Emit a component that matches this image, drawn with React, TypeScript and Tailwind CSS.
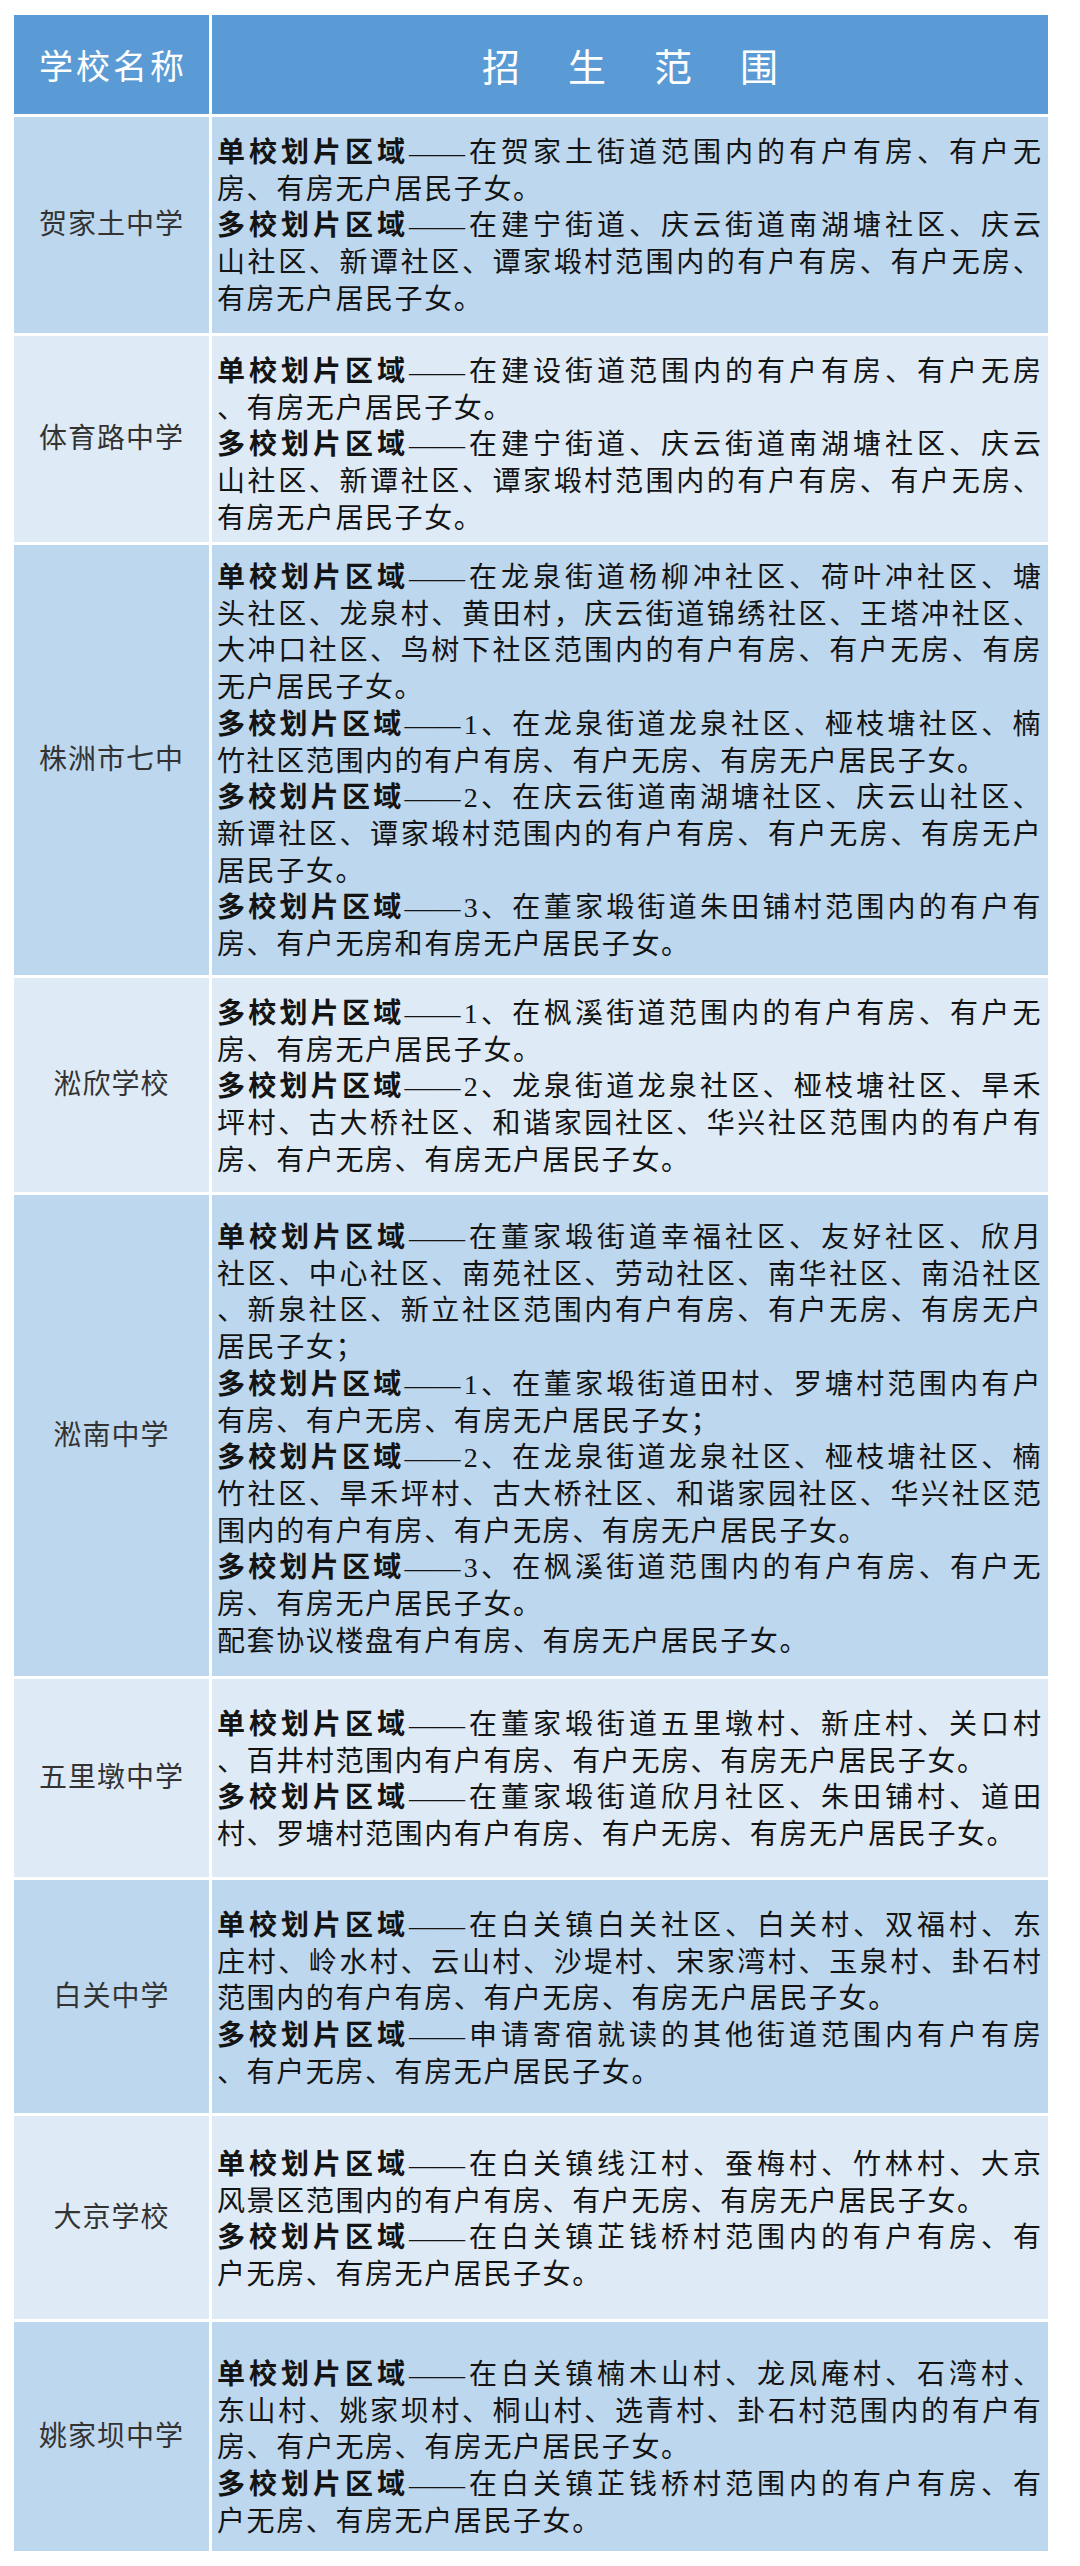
type Para = { b?: string; lines: string[] };
type Row = { name: string; h: string; pt: string; dark: boolean; paras: Para[] };

const S = "单校划片区域";
const M = "多校划片区域";

const rows: Row[] = [
  {
    name: "贺家土中学",
    h: "h-[216px]",
    pt: "pt-[18px]",
    dark: true,
    paras: [
      { b: S, lines: ["——在贺家土街道范围内的有户有房、有户无", "房、有房无户居民子女。"] },
      {
        b: M,
        lines: [
          "——在建宁街道、庆云街道南湖塘社区、庆云",
          "山社区、新谭社区、谭家塅村范围内的有户有房、有户无房、",
          "有房无户居民子女。",
        ],
      },
    ],
  },
  {
    name: "体育路中学",
    h: "h-[206px]",
    pt: "pt-[18px]",
    dark: false,
    paras: [
      { b: S, lines: ["——在建设街道范围内的有户有房、有户无房", "、有房无户居民子女。"] },
      {
        b: M,
        lines: [
          "——在建宁街道、庆云街道南湖塘社区、庆云",
          "山社区、新谭社区、谭家塅村范围内的有户有房、有户无房、",
          "有房无户居民子女。",
        ],
      },
    ],
  },
  {
    name: "株洲市七中",
    h: "h-[430px]",
    pt: "pt-[15px]",
    dark: true,
    paras: [
      {
        b: S,
        lines: [
          "——在龙泉街道杨柳冲社区、荷叶冲社区、塘",
          "头社区、龙泉村、黄田村，庆云街道锦绣社区、王塔冲社区、",
          "大冲口社区、鸟树下社区范围内的有户有房、有户无房、有房",
          "无户居民子女。",
        ],
      },
      { b: M, lines: ["——1、在龙泉街道龙泉社区、桠枝塘社区、楠", "竹社区范围内的有户有房、有户无房、有房无户居民子女。"] },
      {
        b: M,
        lines: [
          "——2、在庆云街道南湖塘社区、庆云山社区、",
          "新谭社区、谭家塅村范围内的有户有房、有户无房、有房无户",
          "居民子女。",
        ],
      },
      { b: M, lines: ["——3、在董家塅街道朱田铺村范围内的有户有", "房、有户无房和有房无户居民子女。"] },
    ],
  },
  {
    name: "淞欣学校",
    h: "h-[214px]",
    pt: "pt-[18px]",
    dark: false,
    paras: [
      { b: M, lines: ["——1、在枫溪街道范围内的有户有房、有户无", "房、有房无户居民子女。"] },
      {
        b: M,
        lines: [
          "——2、龙泉街道龙泉社区、桠枝塘社区、旱禾",
          "坪村、古大桥社区、和谐家园社区、华兴社区范围内的有户有",
          "房、有户无房、有房无户居民子女。",
        ],
      },
    ],
  },
  {
    name: "淞南中学",
    h: "h-[481px]",
    pt: "pt-[25px]",
    dark: true,
    paras: [
      {
        b: S,
        lines: [
          "——在董家塅街道幸福社区、友好社区、欣月",
          "社区、中心社区、南苑社区、劳动社区、南华社区、南沿社区",
          "、新泉社区、新立社区范围内有户有房、有户无房、有房无户",
          "居民子女；",
        ],
      },
      { b: M, lines: ["——1、在董家塅街道田村、罗塘村范围内有户", "有房、有户无房、有房无户居民子女；"] },
      {
        b: M,
        lines: [
          "——2、在龙泉街道龙泉社区、桠枝塘社区、楠",
          "竹社区、旱禾坪村、古大桥社区、和谐家园社区、华兴社区范",
          "围内的有户有房、有户无房、有房无户居民子女。",
        ],
      },
      { b: M, lines: ["——3、在枫溪街道范围内的有户有房、有户无", "房、有房无户居民子女。"] },
      { lines: ["配套协议楼盘有户有房、有房无户居民子女。"] },
    ],
  },
  {
    name: "五里墩中学",
    h: "h-[198px]",
    pt: "pt-[28px]",
    dark: false,
    paras: [
      { b: S, lines: ["——在董家塅街道五里墩村、新庄村、关口村", "、百井村范围内有户有房、有户无房、有房无户居民子女。"] },
      { b: M, lines: ["——在董家塅街道欣月社区、朱田铺村、道田", "村、罗塘村范围内有户有房、有户无房、有房无户居民子女。"] },
    ],
  },
  {
    name: "白关中学",
    h: "h-[233px]",
    pt: "pt-[28px]",
    dark: true,
    paras: [
      {
        b: S,
        lines: [
          "——在白关镇白关社区、白关村、双福村、东",
          "庄村、岭水村、云山村、沙堤村、宋家湾村、玉泉村、卦石村",
          "范围内的有户有房、有户无房、有房无户居民子女。",
        ],
      },
      { b: M, lines: ["——申请寄宿就读的其他街道范围内有户有房", "、有户无房、有房无户居民子女。"] },
    ],
  },
  {
    name: "大京学校",
    h: "h-[203px]",
    pt: "pt-[31px]",
    dark: false,
    paras: [
      { b: S, lines: ["——在白关镇线江村、蚕梅村、竹林村、大京", "风景区范围内的有户有房、有户无房、有房无户居民子女。"] },
      { b: M, lines: ["——在白关镇芷钱桥村范围内的有户有房、有", "户无房、有房无户居民子女。"] },
    ],
  },
  {
    name: "姚家坝中学",
    h: "h-[229px]",
    pt: "pt-[35px]",
    dark: true,
    paras: [
      {
        b: S,
        lines: [
          "——在白关镇楠木山村、龙凤庵村、石湾村、",
          "东山村、姚家坝村、桐山村、选青村、卦石村范围内的有户有",
          "房、有户无房、有房无户居民子女。",
        ],
      },
      { b: M, lines: ["——在白关镇芷钱桥村范围内的有户有房、有", "户无房、有房无户居民子女。"] },
    ],
  },
];

// split a line into units; a run of em dashes stays together
function tokens(text: string) {
  const out: { t: string; at: number }[] = [];
  let i = 0;
  while (i < text.length) {
    if (text[i] === "—") {
      let j = i;
      while (text[j] === "—") j++;
      out.push({ t: text.slice(i, j), at: i });
      i = j;
    } else {
      out.push({ t: text[i], at: i });
      i++;
    }
  }
  return out;
}

function Line({ bold, text, justify }: { bold: string; text: string; justify: boolean }) {
  if (!justify) {
    return (
      <div className="tracking-[1.6px] whitespace-nowrap">
        {bold && <span className="font-bold">{bold}</span>}
        {text}
      </div>
    );
  }
  const full = bold + text;
  return (
    <div className="flex justify-between whitespace-nowrap">
      {tokens(full).map((k, i) => (
        <span key={i} className={k.at < bold.length ? "font-bold" : ""}>
          {k.t}
        </span>
      ))}
    </div>
  );
}

function Content({ paras }: { paras: Para[] }) {
  return (
    <div className="flex flex-col">
      {paras.map((p, pi) =>
        p.lines.map((ln, li) => (
          <Line
            key={`${pi}-${li}`}
            bold={li === 0 && p.b ? p.b : ""}
            text={ln}
            justify={li < p.lines.length - 1}
          />
        ))
      )}
    </div>
  );
}

export default function App() {
  return (
    <div className="min-h-[2566px] w-[1080px] bg-white pl-[14px] pt-[15px]">
      <div className="flex w-[1034px] flex-col gap-[3px]">
        <div className="grid h-[99px] grid-cols-[195px_836px] gap-[3px]">
          <div className="flex items-center justify-center bg-[#5b9bd5] pl-[3px] text-[34px] tracking-[3px] text-white [font-family:'Noto_Sans_CJK_SC',sans-serif]">
            学校名称
          </div>
          <div className="flex items-center justify-center bg-[#5b9bd5] pl-[48px] text-[38px] tracking-[48px] text-white [font-family:'Noto_Sans_CJK_SC',sans-serif]">
            招生范围
          </div>
        </div>
        {rows.map((r) => (
          <div key={r.name} className={`grid grid-cols-[195px_836px] gap-[3px] ${r.h}`}>
            <div
              className={`flex items-center justify-center pb-[6px] text-[28px] tracking-[1px] text-[#333333] [font-family:'Noto_Sans_CJK_SC',sans-serif] ${
                r.dark ? "bg-[#bdd7ee]" : "bg-[#deebf7]"
              }`}
            >
              {r.name}
            </div>
            <div
              className={`pl-[5px] pr-[7px] text-[28px] leading-[36.7px] text-[#141414] [font-family:'Liberation_Serif','Noto_Sans_CJK_SC',serif] ${r.pt} ${
                r.dark ? "bg-[#bdd7ee]" : "bg-[#deebf7]"
              }`}
            >
              <Content paras={r.paras} />
            </div>
          </div>
        ))}
      </div>
    </div>
  );
}
